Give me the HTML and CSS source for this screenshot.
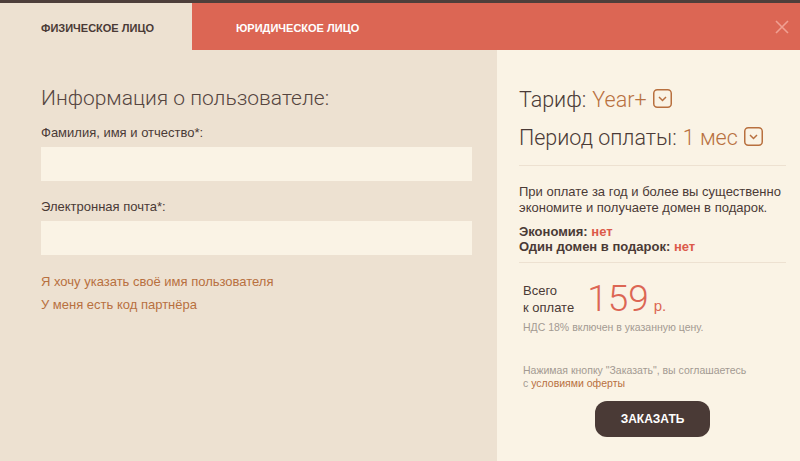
FILE: index.html
```html
<!DOCTYPE html>
<html lang="ru">
<head>
    <meta charset="UTF-8">
    <title>Заказ</title>
    <link rel="stylesheet" href="styles.css">
</head>
<body>
    <div class="modal">
        <div class="tabs">
            <div class="tab active">ФИЗИЧЕСКОЕ ЛИЦО</div>
            <div class="tab">ЮРИДИЧЕСКОЕ ЛИЦО</div>
            <div class="close">
                <svg width="14" height="14" viewBox="0 0 14 14"><path d="M1 1L13 13M13 1L1 13" stroke="#f0a092" stroke-width="1.6"/></svg>
            </div>
        </div>

        <div class="body">
            <!-- Левая колонка: данные пользователя -->
            <div class="form">
                <h2>Информация о пользователе:</h2>
                <label>Фамилия, имя и отчество*:</label>
                <input type="text" class="field">
                <label>Электронная почта*:</label>
                <input type="text" class="field">
                <a class="link" href="#">Я хочу указать своё имя пользователя</a>
                <a class="link" href="#">У меня есть код партнёра</a>
            </div>

            <!-- Правая колонка: тариф и оплата -->
            <div class="summary">
                <div class="option">Тариф: <span class="val">Year+</span> <span class="drop"><svg width="19" height="19" viewBox="0 0 19 19"><rect x="0.75" y="0.75" width="17.5" height="17.5" rx="3.5" fill="none" stroke="#b8703f" stroke-width="1.5"/><path d="M6 8L9.5 11.5L13 8" fill="none" stroke="#b8703f" stroke-width="1.5"/></svg></span></div>
                <div class="option">Период оплаты: <span class="val">1 мес</span> <span class="drop"><svg width="19" height="19" viewBox="0 0 19 19"><rect x="0.75" y="0.75" width="17.5" height="17.5" rx="3.5" fill="none" stroke="#b8703f" stroke-width="1.5"/><path d="M6 8L9.5 11.5L13 8" fill="none" stroke="#b8703f" stroke-width="1.5"/></svg></span></div>
                <div class="info">
                    <p>При оплате за год и более вы существенно экономите и получаете домен в подарок.</p>
                    <div class="bonus">Экономия: <span class="no">нет</span></div>
                    <div class="bonus">Один домен в подарок: <span class="no">нет</span></div>
                </div>
                <div class="total">
                    <div class="total-label">Всего<br>к оплате</div>
                    <div class="price">159</div>
                    <div class="cur">р.</div>
                </div>
                <div class="vat">НДС 18% включен в указанную цену.</div>
                <div class="agree">Нажимая кнопку "Заказать", вы соглашаетесь<br>с <a href="#">условиями оферты</a></div>
                <div class="actions"><button>ЗАКАЗАТЬ</button></div>
            </div>
        </div>
    </div>
</body>
</html>
```

FILE: styles.css
```css
body {
    margin: 0;
    font-family: "Liberation Sans", Arial, sans-serif;
    color: #4a3a36;
    background-color: #ede1d1;
}
.modal {
    width: 800px;
    height: 461px;
    border-top: 3px solid #4e3f3b;
    box-sizing: border-box;
    display: flex;
    flex-direction: column;
}
.tabs {
    display: flex;
    height: 47px;
    background-color: #dc6654;
}
.tab {
    width: 192px;
    display: flex;
    align-items: center;
    padding-left: 44px;
    padding-top: 2px;
    box-sizing: border-box;
    font-size: 11px;
    font-weight: bold;
    color: #fff;
}
.tab.active {
    background-color: #ede1d1;
    color: #4a3a36;
    padding-left: 41px;
}
.close {
    margin-left: auto;
    margin-right: 11px;
    display: flex;
    align-items: center;
}
.body {
    flex: 1;
    display: flex;
}
.form {
    width: 497px;
    padding: 36px 25px 0 41px;
    box-sizing: border-box;
    display: flex;
    flex-direction: column;
}
.form h2 {
    margin: 0 0 15px;
    font-family: Roboto, sans-serif;
    font-weight: 300;
    font-size: 21px;
    color: #55453f;
}
.form label {
    font-size: 13px;
    margin-bottom: 7px;
}
.field {
    height: 34px;
    border: none;
    padding: 0;
    background-color: #faf3e5;
    margin: 0 0 18px;
    width: 431px;
}
.field + label + .field {
    margin-bottom: 19px;
}
.link {
    font-size: 13px;
    color: #b8703f;
    text-decoration: none;
    margin-bottom: 8px;
}
.summary {
    flex: 1;
    background-color: #faf3e5;
    padding: 35px 14px 0 22px;
    display: flex;
    flex-direction: column;
}
.option {
    font-family: Roboto, sans-serif;
    font-weight: 300;
    font-size: 21.5px;
    color: #4a3a36;
    display: flex;
    align-items: center;
    gap: 6px;
    height: 28px;
    margin-bottom: 10px;
}
.option .val {
    color: #b8703f;
}
.drop {
    display: flex;
    margin-top: -2px;
}
.info {
    border-top: 1px solid #ede1d1;
    border-bottom: 1px solid #ede1d1;
    margin-top: 4px;
    padding: 18px 0 8px;
    font-size: 13px;
}
.info p {
    margin: 0 0 8px;
    line-height: 16px;
}
.bonus {
    font-weight: bold;
    line-height: 15px;
}
.no {
    color: #dc5a4a;
}
.total {
    display: flex;
    align-items: flex-end;
    margin-top: 17px;
    padding-left: 4px;
}
.total-label {
    font-size: 13px;
    line-height: 17px;
    margin-right: 13px;
    padding-bottom: 2px;
}
.price {
    font-family: Roboto, sans-serif;
    font-weight: 300;
    font-size: 37px;
    line-height: 38px;
    color: #dc6654;
}
.cur {
    font-size: 15px;
    color: #dc6654;
    margin-left: 5px;
    padding-bottom: 4px;
}
.vat {
    font-size: 10.5px;
    color: #a39a92;
    margin-top: 3px;
    padding-left: 4px;
}
.agree {
    font-size: 10.5px;
    color: #a39a92;
    margin-top: 31px;
    padding-left: 4px;
    line-height: 13px;
}
.agree a {
    color: #b8703f;
    text-decoration: none;
}
.actions {
    display: flex;
    padding-left: 76px;
    margin-top: 11px;
}
button {
    width: 115px;
    height: 36px;
    border: none;
    border-radius: 12px;
    background-color: #4a3a36;
    color: #fff;
    font-family: "Liberation Sans", Arial, sans-serif;
    font-weight: bold;
    font-size: 12px;
    cursor: pointer;
}
```
